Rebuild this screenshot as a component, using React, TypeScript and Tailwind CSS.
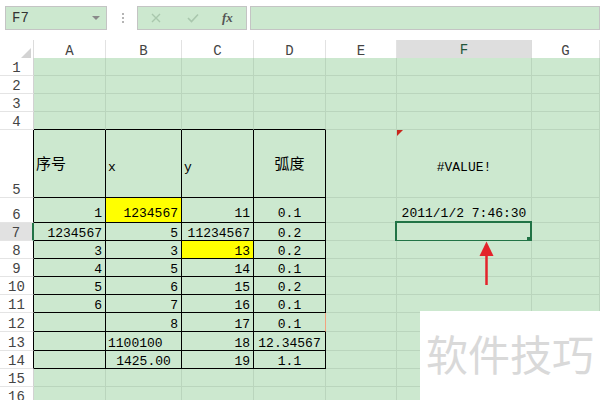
import React from "react"

type Cell = { t: string; a: "l" | "r" | "c"; y?: boolean; cjk?: boolean } | null

interface Row {
  n: number
  h: string
  pb: string
  c: Cell[]
}

const R = (t: string): Cell => ({ t, a: "r" })
const L = (t: string): Cell => ({ t, a: "l" })
const M = (t: string): Cell => ({ t, a: "c" })

const rows: Row[] = [
  { n: 1, h: "h-[18px]", pb: "pb-[1px]", c: [] },
  { n: 2, h: "h-[18px]", pb: "pb-[1px]", c: [] },
  { n: 3, h: "h-[18px]", pb: "pb-[1px]", c: [] },
  { n: 4, h: "h-[18px]", pb: "pb-[1px]", c: [] },
  {
    n: 5,
    h: "h-[68px]",
    pb: "pb-[24px]",
    c: [
      { t: "序号", a: "l", cjk: true },
      L("x"),
      L("y"),
      { t: "弧度", a: "c", cjk: true },
      null,
      M("#VALUE!"),
    ],
  },
  {
    n: 6,
    h: "h-[25px]",
    pb: "pb-[3px]",
    c: [R("1"), { t: "1234567", a: "r", y: true }, R("11"), M("0.1"), null, M("2011/1/2 7:46:30")],
  },
  { n: 7, h: "h-[18px]", pb: "pb-[1px]", c: [R("1234567"), R("5"), R("11234567"), M("0.2")] },
  { n: 8, h: "h-[18px]", pb: "pb-[1px]", c: [R("3"), R("3"), { t: "13", a: "r", y: true }, M("0.2")] },
  { n: 9, h: "h-[18px]", pb: "pb-[1px]", c: [R("4"), R("5"), R("14"), M("0.1")] },
  { n: 10, h: "h-[18px]", pb: "pb-[1px]", c: [R("5"), R("6"), R("15"), M("0.2")] },
  { n: 11, h: "h-[18px]", pb: "pb-[1px]", c: [R("6"), R("7"), R("16"), M("0.1")] },
  { n: 12, h: "h-[19px]", pb: "pb-[1px]", c: [null, R("8"), R("17"), M("0.1")] },
  { n: 13, h: "h-[19px]", pb: "pb-[1px]", c: [null, L("1100100"), R("18"), M("12.34567")] },
  { n: 14, h: "h-[18px]", pb: "pb-[1px]", c: [null, M("1425.00"), R("19"), M("1.1")] },
  { n: 15, h: "h-[18px]", pb: "pb-[1px]", c: [] },
  { n: 16, h: "h-[18px]", pb: "pb-[1px]", c: [] },
]

const letters = ["A", "B", "C", "D", "E", "F", "G"]
const gridCols = "grid grid-cols-[34px_72px_76px_72px_72px_71px_135px_1fr]"
const mono = "font-['Liberation_Mono',monospace]"

function rightBorder(r: number, ci: number) {
  const inTable = r >= 5 && r <= 14 && ci >= 1 && ci <= 4
  if (inTable && r === 12 && ci === 4) return "border-r-[#f2a27e]"
  if (inTable) return "border-r-black"
  return "border-r-[#bad5bd]"
}

function bottomBorder(r: number, ci: number) {
  if (r >= 4 && r <= 14 && ci >= 1 && ci <= 4) return "border-b-black"
  return "border-b-[#bad5bd]"
}

function alignClass(a: "l" | "r" | "c") {
  if (a === "l") return "justify-start pl-[2px]"
  if (a === "r") return "justify-end pr-[3px]"
  return "justify-center"
}

const RowHeader = ({ n }: { n: number }) => {
  const sel = n === 7
  const table = n >= 5 && n <= 14
  let cls = "border-r border-r-[#d2d2d2] bg-white"
  if (sel) cls = "border-r-2 border-r-[#217346] bg-[#e1e1e1]"
  else if (table) cls = "border-r border-r-black bg-white"
  return (
    <div
      className={`flex items-end justify-center border-b border-b-[#e4e4e4] pb-[2px] text-[14px] leading-[10px] text-[#444] ${mono} ${cls}`}
    >
      {n}
    </div>
  )
}

const SheetRow = ({ row }: { row: Row }) => (
  <div className={`${gridCols} ${row.h}`}>
    <RowHeader n={row.n} />
    {letters.map((_, i) => {
      const ci = i + 1
      const cell = row.c[i] ?? null
      const isF7 = row.n === 7 && ci === 6
      const isF5 = row.n === 5 && ci === 6
      return (
        <div
          key={ci}
          className={`relative flex items-end whitespace-nowrap border-r border-b text-black ${row.pb} ${rightBorder(
            row.n,
            ci
          )} ${bottomBorder(row.n, ci)} ${cell?.y ? "bg-[#ffff00]" : "bg-[#cce8cf]"} ${
            cell ? alignClass(cell.a) : ""
          }`}
        >
          {cell && (
            <span
              className={
                cell.cjk
                  ? "font-['Noto_Sans_CJK_SC',sans-serif] text-[15px] leading-[20px]"
                  : `${mono} text-[13px] leading-[10px]`
              }
            >
              {cell.t}
            </span>
          )}
          {isF5 && (
            <svg className="absolute left-0 top-0" width="6" height="6">
              <polygon points="0,0 6,0 0,6" fill="#c8261c" />
            </svg>
          )}
          {isF7 && (
            <div className="absolute -left-[2px] -top-[2px] -right-[1px] -bottom-[2px] border-2 border-[#217346]">
              <div className="absolute -bottom-[3px] -right-[3px] h-[6px] w-[6px] bg-[#217346]" />
            </div>
          )}
        </div>
      )
    })}
  </div>
)

export default function App() {
  return (
    <div className="relative h-[400px] w-[600px] overflow-hidden bg-white">
      {/* toolbar */}
      <div className="flex h-[40px] items-start bg-white pt-[6px]">
        <div className="ml-[5px] flex h-[24px] w-[102px] items-center justify-between border border-[#c4c4c4] bg-[#cce8cf] pl-[6px] pr-[6px]">
          <span className={`${mono} text-[14px] text-[#333]`}>F7</span>
          <svg width="8" height="4">
            <polygon points="0,0 8,0 4,4" fill="#8a8a8a" />
          </svg>
        </div>
        <div className="ml-[15px] mt-[7px] flex flex-col gap-[2px]">
          <div className="h-[2px] w-[2px] bg-[#b5b5b5]" />
          <div className="h-[2px] w-[2px] bg-[#b5b5b5]" />
          <div className="h-[2px] w-[2px] bg-[#b5b5b5]" />
        </div>
        <div className="ml-[13px] flex h-[24px] w-[110px] items-center border border-[#c4c4c4] bg-[#cce8cf] pl-[13px]">
          <svg width="10" height="10" viewBox="0 0 10 10">
            <path d="M1 1 L9 9 M9 1 L1 9" stroke="#a9c7ad" strokeWidth="1.4" />
          </svg>
          <svg className="ml-[26px]" width="12" height="10" viewBox="0 0 12 10">
            <path d="M1 5 L4.5 8.5 L11 1.5" stroke="#a9c7ad" strokeWidth="1.6" fill="none" />
          </svg>
          <span className="ml-[23px] font-['Liberation_Serif',serif] text-[13px] font-bold italic text-[#555]">fx</span>
        </div>
        <div className="ml-[3px] h-[24px] flex-1 border border-[#c4c4c4] bg-[#cce8cf]" />
      </div>

      {/* column headers */}
      <div className={`${gridCols} h-[18px]`}>
        <div className="flex items-end justify-end border-r border-b border-r-[#dcdcdc] border-b-[#c3c3c3] bg-white pb-[2px] pr-[2px]">
          <svg width="12" height="12">
            <polygon points="12,0 12,12 0,12" fill="#d3d3d3" />
          </svg>
        </div>
        {letters.map((l) =>
          l === "F" ? (
            <div
              key={l}
              className={`flex items-center justify-center border-r border-b-2 border-r-[#dcdcdc] border-b-[#217346] bg-[#dedede] text-[14px] text-[#22553a] ${mono}`}
            >
              {l}
            </div>
          ) : (
            <div
              key={l}
              className={`flex items-center justify-center border-r border-b border-r-[#e2e2e2] border-b-[#c3c3c3] bg-white text-[14px] text-[#444] ${mono}`}
            >
              {l}
            </div>
          )
        )}
      </div>

      {rows.map((r) => (
        <SheetRow key={r.n} row={r} />
      ))}

      {/* red arrow */}
      <svg className="absolute left-[478px] top-[240px]" width="18" height="47" viewBox="0 0 18 47">
        <polygon points="8.5,1.5 1.5,16 15.5,16" fill="#e3232b" />
        <line x1="8.5" y1="14" x2="8.5" y2="45" stroke="#e3232b" strokeWidth="2.5" />
      </svg>

      {/* watermark */}
      <div className="absolute left-[420px] top-[311px] h-[89px] w-[180px] bg-white pl-[6px] pt-[21px]">
        <span className="font-['Noto_Sans_CJK_SC',sans-serif] text-[42px] leading-none text-[#d9d9d9]">软件技巧</span>
      </div>
    </div>
  )
}
